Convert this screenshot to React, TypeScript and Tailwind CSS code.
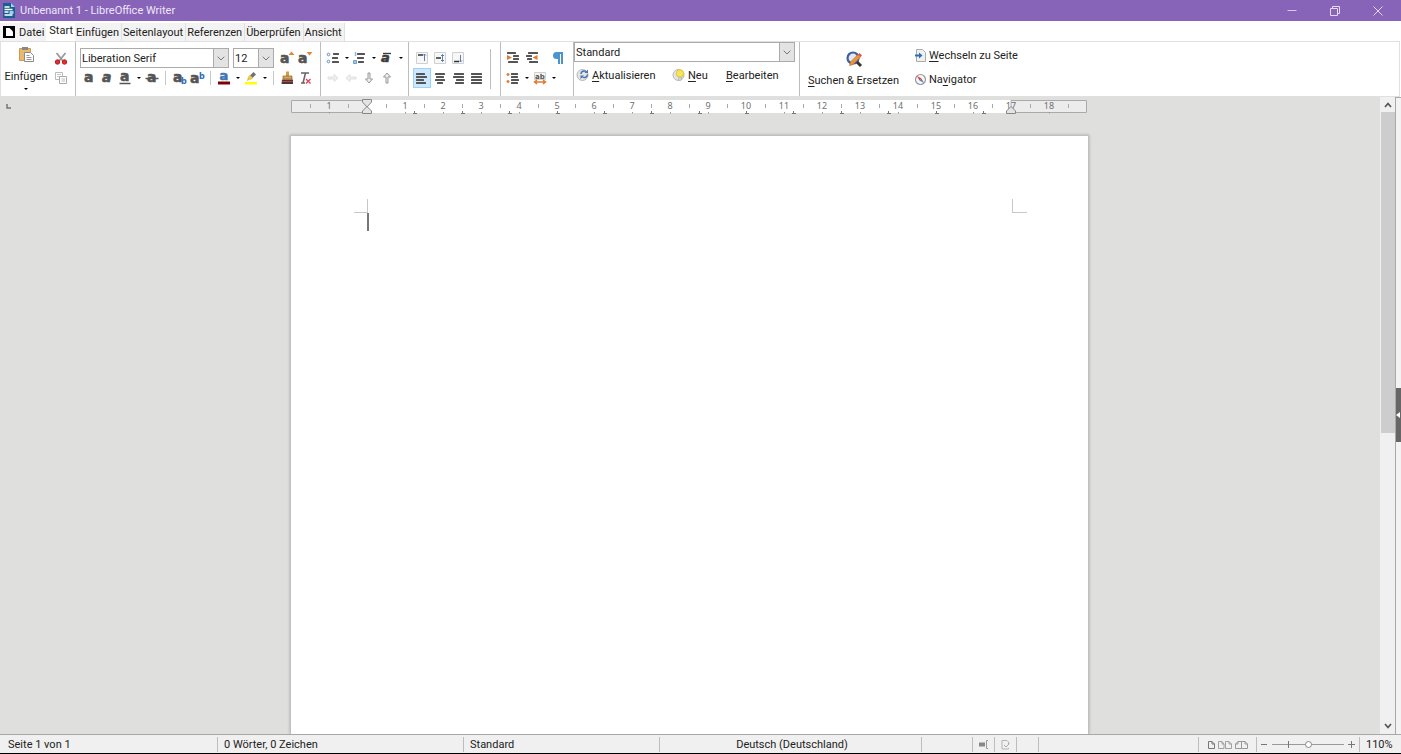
import type { ReactNode } from "react";

const INK = "#555555";

function Svg({ children, className = "h-4 w-4", box = "0 0 16 16" }: { children: ReactNode; className?: string; box?: string }) {
  return (
    <svg viewBox={box} className={`shrink-0 overflow-visible ${className}`} fill="none" aria-hidden="true">
      {children}
    </svg>
  );
}

function Tool({ label, active, children }: { label: string; active?: boolean; children: ReactNode }) {
  return (
    <button
      type="button"
      aria-label={label}
      title={label}
      className={`flex h-[20px] w-[18px] shrink-0 items-center justify-center ${active ? "border border-[#99d1ff] bg-[#cce8ff]" : "hover:bg-[#e5f3ff]"}`}
    >
      <Svg>{children}</Svg>
    </button>
  );
}

function Caret({ label }: { label: string }) {
  return (
    <button type="button" aria-label={label} className="flex h-[20px] w-[9px] shrink-0 items-center justify-center">
      <Svg box="0 0 4 2" className="h-[2px] w-1">
        <path d="M0 0h4L2 2z" fill="#000" />
      </Svg>
    </button>
  );
}

function Sep() {
  return <span className="mx-1 h-[14px] w-px shrink-0 bg-[#c8c8c8]" />;
}

function Divider() {
  return <div className="w-px shrink-0 self-stretch bg-[#bdbdbd]" />;
}

function Letter({ italic, fill = INK, x = 2, y = 12, size = 14 }: { italic?: boolean; fill?: string; x?: number; y?: number; size?: number }) {
  return (
    <text x={x} y={y} fontSize={size} fontWeight="700" fontStyle={italic ? "italic" : "normal"} fontFamily="DejaVu Sans, sans-serif" fill={fill} stroke={fill} strokeWidth="0.6">
      a
    </text>
  );
}

function Lines({ rows }: { rows: [number, number, number][] }) {
  return (
    <>
      {rows.map(([x, y, w]) => (
        <rect key={y} x={x} y={y} width={w} height="2" rx="0.5" fill={INK} />
      ))}
    </>
  );
}

function Combo({ label, value, options, className }: { label: string; value: string; options: string[]; className: string }) {
  return (
    <div className={`relative shrink-0 ${className}`}>
      <select
        aria-label={label}
        defaultValue={value}
        className="h-full w-full appearance-none rounded-none border border-[#ababab] bg-white pl-px pr-4 pt-[2px] text-[11px] leading-[16px] text-[#222] outline-none"
      >
        {options.map((o) => (
          <option key={o}>{o}</option>
        ))}
      </select>
      <span className="pointer-events-none absolute inset-y-0 right-0 flex w-4 items-center justify-center border border-[#ababab] bg-[#e3e3e3]">
        <Svg box="0 0 8 5" className="h-[5px] w-2">
          <path d="M.7.7 4 4 7.300.7" stroke="#777" />
        </Svg>
      </span>
    </div>
  );
}

function Key({ children }: { children: ReactNode }) {
  return <span className="underline underline-offset-2">{children}</span>;
}

function TextTool({ icon, children, className = "" }: { icon?: ReactNode; children: ReactNode; className?: string }) {
  return (
    <button type="button" className={`flex h-[18px] shrink-0 items-center gap-[2px] whitespace-nowrap ${className}`}>
      {icon}
      <span className="pt-[2px]">{children}</span>
    </button>
  );
}

const TABS = ["Start", "Einfügen", "Seitenlayout", "Referenzen", "Überprüfen", "Ansicht"];

function TitleBar() {
  return (
    <header className="flex h-[21px] shrink-0 items-center bg-[#8764b8] text-[11px] text-[#eee6f7]">
      <Svg className="ml-[2px] h-[15px] w-[14px]" box="0 0 14 15">
        <path d="M1 0h8l4 4v11H1z" fill="#15608f" />
        <path d="M9 0v4h4z" fill="#a5d2ee" />
        <path d="M2.500 4h5M2.500 6.500h8M2.500 9h4M2.500 12h8" stroke="#fff" strokeWidth="1.400" />
        <path d="M7.500 8h4v3h-4z" fill="#9fd0ee" />
      </Svg>
      <h1 className="ml-1 grow pt-[2px]">Unbenannt 1 - LibreOffice Writer</h1>
      <div className="flex pr-px">
        <button type="button" aria-label="Minimieren" className="flex h-[21px] w-[43px] items-center justify-center">
          <Svg className="h-[10px] w-[10px]" box="0 0 10 10">
            <path d="M.5 4.500h9" stroke="#d8c8ec" />
          </Svg>
        </button>
        <button type="button" aria-label="Verkleinern" className="flex h-[21px] w-[43px] items-center justify-center">
          <Svg className="h-[10px] w-[10px]" box="0 0 10 10">
            <path d="M.5 2.500h7v7h-7zM2.500 2.500v-2h7v7h-2" stroke="#e4d8f2" />
          </Svg>
        </button>
        <button type="button" aria-label="Schließen" className="flex h-[21px] w-[44px] items-center justify-center">
          <Svg className="h-[10px] w-[10px]" box="0 0 10 10">
            <path d="m.5.5 9 9m0-9-9 9" stroke="#e4d8f2" />
          </Svg>
        </button>
      </div>
    </header>
  );
}

function TabBar() {
  return (
    <nav className="flex h-[20px] shrink-0 items-end bg-white text-[11px] text-[#222]">
      <button type="button" className="flex h-[18px] items-center gap-1 bg-[#f3f3f3] pl-[3px] pr-[2px]">
        <Svg className="h-3 w-3" box="0 0 12 12">
          <path d="M0 0h12v12H0z" fill="#000" />
          <path d="M3 2h3.500L10 5.500V10H3z" fill="#fff" />
        </Svg>
        <span className="pt-[2px]">Datei</span>
      </button>
      {TABS.map((t) => (
        <button
          key={t}
          type="button"
          className={t === "Start" ? "h-[20px] bg-white pl-[3px] pr-[2px] pt-px" : "h-[18px] border-r border-[#e0e0e0] bg-[#f3f3f3] pl-px pr-[2px] pt-[2px]"}
        >
          {t}
        </button>
      ))}
    </nav>
  );
}

function Ribbon() {
  return (
    <div className="mr-px flex h-[56px] shrink-0 overflow-hidden border border-[#e0e0e0] bg-white text-[11px] leading-[14px] text-[#222]">
      <div className="flex w-[74px] shrink-0 items-start pl-[3px] pt-1">
        <button type="button" className="flex w-[44px] flex-col items-center">
          <Svg className="h-[18px] w-[18px]" box="0 0 18 18">
            <path d="M2.500 2.500h11v12h-11z" fill="#e9b96e" stroke="#c79a55" />
            <path d="M5 1h6v3H5z" fill="#888" />
            <path d="M7.500 6.500h6l3 3v6h-9z" fill="#fff" stroke="#8a8a8a" />
            <path d="M9.500 9.500h3M9.500 11.500h5M9.500 13.500h5" stroke="#999" />
          </Svg>
          <span className="mt-[6px]">Einfügen</span>
          <Svg box="0 0 4 2" className="mt-1 h-[2px] w-1">
            <path d="M0 0h4L2 2z" fill="#000" />
          </Svg>
        </button>
        <div className="ml-1 flex flex-col pt-[2px]">
          <Tool label="Ausschneiden">
            <path d="M3.500 3 10 11M12.500 3 6 11" stroke="#999" strokeWidth="1.800" />
            <circle cx="4.500" cy="12" r="2.200" fill="#e03030" stroke="#c01818" />
            <circle cx="11.500" cy="12" r="2.200" fill="#e03030" stroke="#c01818" />
          </Tool>
          <Tool label="Kopieren">
            <path d="M2.500 2.500h7v7h-7z" fill="#fff" stroke="#bbb" />
            <path d="M4 4.500h4M4 6.500h3" stroke="#c8c8c8" />
            <path d="M6.500 6.500h7v7h-7z" fill="#fff" stroke="#aaa" />
            <path d="M8.500 9h3.500M8.500 11h3.500" stroke="#bbb" />
          </Tool>
        </div>
      </div>
      <Divider />

      <div className="flex w-[244px] shrink-0 flex-col pl-1 pt-[6px]">
        <div className="flex items-center">
          <Combo label="Schriftname" value="Liberation Serif" options={["Liberation Serif", "Liberation Sans"]} className="h-[20px] w-[149px]" />
          <Combo label="Schriftgröße" value="12" options={["10", "11", "12", "14"]} className="ml-1 mr-1 h-[20px] w-[41px]" />
          <Tool label="Schrift vergrößern">
            <Letter x={1} y={13} />
            <path d="m9.500 5 3-3.500 3 3.500z" fill="#e8833a" />
          </Tool>
          <Tool label="Schrift verkleinern">
            <Letter x={1} y={13} />
            <path d="m9.500 2 3 3.500 3-3.500z" fill="#e8833a" />
          </Tool>
        </div>
        <div className="flex items-center">
          <Tool label="Fett">
            <Letter x={3} />
          </Tool>
          <Tool label="Kursiv">
            <Letter x={3} italic />
          </Tool>
          <Tool label="Unterstrichen">
            <Letter x={3} y={11} size={14} />
            <path d="M2.500 13.500h11" stroke={INK} strokeWidth="1.500" />
          </Tool>
          <Caret label="Unterstreichungsarten" />
          <Tool label="Durchgestrichen">
            <Letter x={3} />
            <path d="M1.500 8.500h13" stroke={INK} strokeWidth="1.500" />
          </Tool>
          <Sep />
          <Tool label="Tiefgestellt">
            <Letter x={2} y={12} size={14} />
            <text x="10" y="14" fontSize="8" fontWeight="700" fontFamily="DejaVu Sans, sans-serif" fill="#2f6db5">b</text>
          </Tool>
          <Tool label="Hochgestellt">
            <Letter x={1} y={13} size={14} />
            <text x="10" y="9" fontSize="8" fontWeight="700" fontFamily="DejaVu Sans, sans-serif" fill="#2f6db5">b</text>
          </Tool>
          <Sep />
          <Tool label="Schriftfarbe">
            <Letter x={3.5} y={10} fill="#3d77b8" size={13} />
            <path d="M2 11.500h12v3H2z" fill="#800000" />
          </Tool>
          <Caret label="Schriftfarbe wählen" />
          <Tool label="Zeichenhervorhebung">
            <path d="M2 12h12v2.500H2z" fill="#ffff00" />
            <path d="m4 11 1-4 2 2.500z" fill="#d9c21c" />
            <path d="m5.500 7 5-5 2.500 2.500-5 5z" fill="#707070" />
            <path d="m5 7 2-2 3 3-2.500 2z" fill="#e8c94a" />
          </Tool>
          <Caret label="Hervorhebungsfarbe wählen" />
          <Sep />
          <Tool label="Formatierung übertragen">
            <path d="M7 1.500h3v5H7z" fill="#d79a45" />
            <path d="M4 6h9v3H4z" fill="#e1a34c" stroke="#8a6122" strokeWidth="0.700" />
            <path d="M3 9.500h11V14H2.500z" fill="#4a3a35" />
            <path d="M3 11.500h11" stroke="#b44" />
          </Tool>
          <Tool label="Direkte Formatierung löschen">
            <path d="M4 3h8M8.500 3 6 13M4 13h4" stroke="#666" strokeWidth="1.500" />
            <path d="m9 9 4.500 4.500m0-4.500L9 13.500" stroke="#e04050" strokeWidth="1.300" />
          </Tool>
        </div>
      </div>
      <Divider />

      <div className="flex w-[87px] shrink-0 flex-col pl-[3px] pt-[6px]">
        <div className="flex">
          <Tool label="Aufzählungszeichen">
            <circle cx="3.500" cy="4.500" r="1.300" stroke="#5b8fc8" />
            <circle cx="3.500" cy="11.500" r="1.300" stroke="#5b8fc8" />
            <Lines rows={[[8, 3, 6], [7, 7, 6], [7, 11, 7]]} />
          </Tool>
          <Caret label="Aufzählungen wählen" />
          <Tool label="Nummerierung">
            <path d="M3.500 2v4" stroke="#8fb3dc" strokeWidth="1.500" />
            <path d="M1.500 10.500h3v3h-3z" fill="#a9c6e6" stroke="#6f9fd0" />
            <Lines rows={[[5, 3, 8], [5, 7, 7], [6, 11, 6]]} />
          </Tool>
          <Caret label="Nummerierungen wählen" />
          <Tool label="Zeichenformat">
            <Letter x={2} y={12} italic size={13} fill="#3c3c3c" />
            <path d="M4 3.500h8" stroke="#3c3c3c" strokeWidth="1.400" />
          </Tool>
          <Caret label="Zeichenformate wählen" />
        </div>
        <div className="flex">
          <Tool label="Tiefer stufen">
            <path d="M3 7h6V4.500L13 8l-4 3.500V9H3z" fill="#f0f0f0" stroke="#e0e0e0" />
          </Tool>
          <Tool label="Höher stufen">
            <path d="M13 7H7V4.500L3 8l4 3.500V9h6z" fill="#f0f0f0" stroke="#e0e0e0" />
          </Tool>
          <Tool label="Nach unten">
            <path d="M7 3v6H4.500L8 13l3.500-4H9V3z" fill="#eee" stroke="#999" />
          </Tool>
          <Tool label="Nach oben">
            <path d="M7 13V7H4.500L8 3l3.500 4H9v6z" fill="#eee" stroke="#999" />
          </Tool>
        </div>
      </div>
      <Divider />

      <div className="flex w-[81px] shrink-0 flex-col pl-1 pt-[6px]">
        <div className="flex">
          <Tool label="Oben ausrichten">
            <path d="M2.500 2.500h11v11h-11z" fill="#f7f7f7" stroke="#d0d0d0" />
            <path d="M4 5h5" stroke="#333" strokeWidth="1.500" />
            <path d="M10.500 4v7M9 5.500 10.500 4 12 5.500" stroke="#5b80b0" />
          </Tool>
          <Tool label="Vertikal zentrieren">
            <path d="M2.500 2.500h11v11h-11z" fill="#f7f7f7" stroke="#d0d0d0" />
            <path d="M4 8h5" stroke="#333" strokeWidth="1.500" />
            <path d="M10.500 4.500v7M9 6l1.500-1.500L12 6M9 10l1.500 1.500L12 10" stroke="#5b80b0" />
          </Tool>
          <Tool label="Unten ausrichten">
            <path d="M2.500 2.500h11v11h-11z" fill="#f7f7f7" stroke="#d0d0d0" />
            <path d="M4 11.500h5" stroke="#333" strokeWidth="1.500" />
            <path d="M10.500 5v7M9 10.500l1.500 1.500 1.500-1.500" stroke="#5b80b0" />
          </Tool>
        </div>
        <div className="flex">
          <Tool label="Linksbündig" active>
            <Lines rows={[[2, 3, 9], [2, 6, 11], [2, 9, 8], [2, 12, 10]]} />
          </Tool>
          <Tool label="Zentriert">
            <Lines rows={[[3, 3, 10], [4, 6, 8], [3, 9, 10], [5, 12, 6]]} />
          </Tool>
          <Tool label="Rechtsbündig">
            <Lines rows={[[4, 3, 10], [3, 6, 11], [6, 9, 8], [5, 12, 9]]} />
          </Tool>
          <Tool label="Blocksatz">
            <Lines rows={[[3, 3, 11], [3, 6, 11], [3, 9, 11], [3, 12, 11]]} />
          </Tool>
        </div>
      </div>
      <div className="my-[7px] w-px shrink-0 bg-[#bdbdbd]" />
      <div className="w-[9px] shrink-0" />
      <Divider />

      <div className="flex w-[72px] shrink-0 flex-col pl-[3px] pt-[6px]">
        <div className="flex">
          <Tool label="Einzug vergrößern">
            <Lines rows={[[2, 2, 9], [8, 5, 6], [8, 8, 6], [3, 11, 10]]} />
            <path d="M2 5 7 7.500 2 10z" fill="#e07b30" />
          </Tool>
          <Tool label="Einzug verkleinern">
            <Lines rows={[[5, 2, 10], [3, 5, 6], [4, 8, 5], [6, 11, 9]]} />
            <path d="M14.500 5 9.500 7.500l5 2.500z" fill="#e07b30" />
          </Tool>
          <span className="w-[9px] shrink-0" />
          <Tool label="Formatierungszeichen">
            <path d="M13 2H6.500a3.500 3.500 0 0 0 0 7H8v5h2V4h1v10h2z" fill="#4d94cf" />
          </Tool>
        </div>
        <div className="flex">
          <Tool label="Zeilenabstand">
            <path d="M1.500 4.500h3M1.500 11.500h3M3 3v3M3 10v3" stroke="#e07b30" strokeWidth="1.400" />
            <Lines rows={[[6, 3, 7], [6, 6, 7], [6, 9, 8], [6, 12, 7]]} />
          </Tool>
          <Caret label="Zeilenabstand wählen" />
          <Tool label="Zeichenabstand">
            <path d="M2.500 2.500h11v7h-11z" fill="#f4f4f4" stroke="#d0d0d0" />
            <text x="3" y="8.500" fontSize="7" fontWeight="700" fontFamily="DejaVu Sans, sans-serif" fill={INK}>ab</text>
            <path d="M3 12h10M5 10l-2.500 2L5 14M11 10l2.500 2L11 14" stroke="#e07b30" strokeWidth="1.500" />
          </Tool>
          <Caret label="Zeichenabstand wählen" />
        </div>
      </div>
      <Divider />

      <div className="flex w-[225px] shrink-0 flex-col">
        <Combo label="Absatzvorlage" value="Standard" options={["Standard", "Textkörper", "Überschrift 1"]} className="mr-1 h-[20px]" />
        <div className="mt-1 flex items-center">
          <TextTool
            className="ml-[2px] w-[96px]"
            icon={
              <Svg className="h-[14px] w-[14px]" box="0 0 14 14">
                <circle cx="6.500" cy="7" r="5.500" fill="#e4e4e4" stroke="#b8b8b8" />
                <path d="M5 6a3.200 3.200 0 0 1 5-2.500M11.500 6.500A3.200 3.200 0 0 1 6.500 9" stroke="#4674ae" strokeWidth="1.500" />
                <path d="M8.500 5H12V1.500zM8 7.500H4.500V11z" fill="#4674ae" />
              </Svg>
            }
          >
            <Key>A</Key>ktualisieren
          </TextTool>
          <TextTool
            className="w-[54px]"
            icon={
              <Svg className="h-[14px] w-[14px]" box="0 0 14 14">
                <circle cx="6.500" cy="7" r="5.500" fill="#e4e4e4" stroke="#b8b8b8" />
                <circle cx="8" cy="5.500" r="3.700" fill="#f7e65a" stroke="#e0c63a" />
                <path d="M6.500 9.500h3V12h-3z" fill="#ddd" stroke="#aaa" strokeWidth="0.600" />
              </Svg>
            }
          >
            <Key>N</Key>eu
          </TextTool>
          <TextTool>
            <Key>B</Key>earbeiten
          </TextTool>
        </div>
      </div>
      <Divider />

      <div className="flex shrink-0 items-start pl-2">
        <button type="button" className="flex flex-col items-center whitespace-nowrap pt-2">
          <Svg className="h-[18px] w-[18px]" box="0 0 18 18">
            <circle cx="8" cy="8" r="5.500" fill="#dfe8f5" stroke="#3f5f9f" strokeWidth="2.200" />
            <path d="m12 12 4 4" stroke="#333" strokeWidth="3" />
            <path d="m4.500 15.500 1-3.500L13 4.500l2.500 2.500-7.500 7.500z" fill="#f0923b" stroke="#b5651d" strokeWidth="0.600" />
            <path d="m13 4.500 1.500-1.500L17 5.500 15.500 7z" fill="#e0525a" />
          </Svg>
          <span className="mt-[6px]">
            <Key>S</Key>uchen &amp; Ersetzen
          </span>
        </button>
        <div className="ml-[15px] flex flex-col gap-[6px] pt-1">
          <TextTool
            icon={
              <Svg className="h-[13px] w-[13px]" box="0 0 13 13">
                <path d="M2.500.5h6l3 3v9h-9z" fill="#eef0f2" stroke="#aaa" />
                <path d="M1 5.500h4V3.500L8.500 6.500 5 9.500v-2H1z" fill="#2f6fae" />
              </Svg>
            }
          >
            <Key>W</Key>echseln zu Seite
          </TextTool>
          <TextTool
            icon={
              <Svg className="h-[13px] w-[13px]" box="0 0 13 13">
                <circle cx="6.500" cy="6.500" r="5" fill="#f6f6f6" stroke="#999" strokeWidth="1.200" />
                <path d="m3 3 4.500 2.500L5.500 7.500z" fill="#e03a3a" />
                <path d="m10 10-4.500-2.500 2-2z" fill="#5a7fb8" />
              </Svg>
            }
          >
            Na<Key>v</Key>igator
          </TextTool>
        </div>
      </div>
    </div>
  );
}

const ZERO = 76;
const CM = 37.9;
const MARKS = Array.from({ length: 18 }, (_, i) => i + 1);

function Ruler() {
  const at = (n: number) => Math.round(ZERO + CM * n);
  return (
    <svg viewBox="0 0 797 18" className="mt-px h-[18px] w-[797px] shrink-0" fill="none" role="img" aria-label="Lineal">
      <path d="M0 2h796v13H0z" fill="#fff" />
      <path d="M.5 2.500H76v12H.5zM720 2.500h75.500v12H720z" fill="#ececec" stroke="#aaa" />
      {[-1, ...MARKS].map((n) => (
        <g key={n}>
          <text x={at(n)} y="11" fontSize="9" textAnchor="middle" fontFamily="Noto Sans, sans-serif" fill="#707070">
            {Math.abs(n)}
          </text>
          <path d={`M${at(n) + 0.5} 14v1.500`} stroke="#999" />
        </g>
      ))}
      {[-2, -1, 0, ...MARKS].map((n) => (
        <path key={n} d={`M${at(n + 0.5) + 0.5} 6v4`} stroke="#aaa" />
      ))}
      {MARKS.slice(0, 13).map((n) => (
        <path key={n} d={`M${at(n * 1.25) - 1} 15.500h4M${at(n * 1.25) + 0.5} 13v2`} stroke="#777" />
      ))}
      <path d="M71.500 1.500h9v2.500L76 9l-4.500-5z" fill="#e4e4e4" stroke="#888" />
      <path d="M71.500 15.500h9V13L76 8.500 71.500 13zM715.500 15.500h9V13L720 8.500l-4.500 4.500z" fill="#e4e4e4" stroke="#888" />
    </svg>
  );
}

function Workspace() {
  return (
    <main className="flex min-h-0 grow bg-[#dfdfde]">
      <div className="relative flex min-w-0 grow flex-col items-center overflow-hidden pr-[2px]">
        <Svg className="absolute left-[6px] top-[7px] h-[5px] w-[5px]" box="0 0 5 5">
          <path d="M1 0v4h4" stroke="#777" strokeWidth="1.500" />
        </Svg>
        <Ruler />
        <article className="mt-[19px] w-[799px] grow border-x border-t border-[#c0c0c0] bg-white pl-[63px] pr-[61px] pt-[63px] shadow-[0_0_3px_rgba(0,0,0,0.25)]">
          <div className="flex justify-between">
            <div>
              <div className="h-[14px] w-[14px] border-b border-r border-[#c8c8c8]" />
              <div className="ml-[13px] h-[18px] w-[2px] bg-[#777]" />
            </div>
            <div className="h-[14px] w-[15px] border-b border-l border-[#c8c8c8]" />
          </div>
        </article>
      </div>
      <div className="flex w-[15px] shrink-0 flex-col bg-[#f0f0f0]">
        <button type="button" aria-label="Nach oben blättern" className="flex h-[15px] items-center justify-center">
          <Svg box="0 0 8 6" className="h-[6px] w-2">
            <path d="m1 5 3-3.500L7 5" stroke="#555" strokeWidth="1.700" />
          </Svg>
        </button>
        <div className="min-h-0 grow">
          <div className="ml-px h-[53%] bg-[#cdcdcd]" />
        </div>
        <button type="button" aria-label="Nach unten blättern" className="flex h-[16px] items-center justify-center">
          <Svg box="0 0 8 6" className="h-[6px] w-2">
            <path d="m1 1 3 3.500L7 1" stroke="#555" strokeWidth="1.700" />
          </Svg>
        </button>
      </div>
      <aside className="flex w-[6px] shrink-0 flex-col justify-center border-l border-t border-[#a8a8a8] bg-[#f3f3f3] pb-[2px]">
        <button type="button" aria-label="Seitenleiste einblenden" className="flex h-[54px] w-[5px] items-center bg-[#666]">
          <Svg box="0 0 4 6" className="h-[6px] w-1">
            <path d="M4 0v6L0 3z" fill="#fff" />
          </Svg>
        </button>
      </aside>
    </main>
  );
}

function StatusBar() {
  const cell = "flex shrink-0 items-center border-r border-[#bdbdbd] my-px";
  return (
    <footer className="shrink-0">
      <div className="flex h-[19px] border-t border-[#a8a8a8] bg-[#f0f0f0] pt-px text-[11px] leading-[14px] text-[#222]">
        <div className={`${cell} w-[218px] pl-2 pt-px`}>Seite 1 von 1</div>
        <div className={`${cell} w-[246px] pl-[6px] pt-px`}>0 Wörter, 0 Zeichen</div>
        <div className={`${cell} w-[196px] pl-[6px] pt-px`}>Standard</div>
        <div className={`${cell} w-[262px] justify-center pl-[3px] pt-px`}>Deutsch (Deutschland)</div>
        <div className={`${cell} w-[51px]`} />
        <div className={`${cell} w-[22px] justify-center`}>
          <Svg box="0 0 9 9" className="h-[9px] w-[9px]">
            <path d="M0 2.500h6v4H0z" fill="#888" />
            <path d="M9 .5H7.500v8H9" stroke="#999" />
          </Svg>
        </div>
        <div className={`${cell} w-[22px] justify-center`}>
          <Svg box="0 0 9 10" className="h-[10px] w-[9px]">
            <path d="M7.500 4V2L6 .5H1v8.500h6.500V8" stroke="#b4b4b4" />
            <path d="m3 5 2 2 3.500-3.500" stroke="#aaa" />
          </Svg>
        </div>
        <div className={`${cell} w-[22px]`} />
        <div className="my-px grow border-r border-[#bdbdbd]" />
        <div className={`${cell} w-[58px] justify-center gap-[3px]`}>
          <button type="button" aria-label="Einzelseite" className="flex">
            <Svg box="0 0 7 8" className="h-2 w-[7px]">
              <path d="M.5.5h3.500l2.500 2.500v4.500h-6zM4 .5V3h2.500" stroke="#777" />
            </Svg>
          </button>
          <button type="button" aria-label="Mehrere Seiten" className="flex">
            <Svg box="0 0 14 8" className="h-2 w-[14px]">
              <path d="M.5.500H4L6 3v4.500H.5zM4 .5V3h2M7.500.5H11L13.500 3v4.500h-6zM11 .5V3h2.500" stroke="#a0a0a0" />
            </Svg>
          </button>
          <button type="button" aria-label="Buchansicht" className="flex">
            <Svg box="0 0 13 8" className="h-2 w-[13px]">
              <path d="M.5 7.500V3L3 .5h3.500v7zM6.500.5H10L12.500 3v4.500h-6zM3 .5V3H.5M10 .5V3h2.500" stroke="#999" />
            </Svg>
          </button>
        </div>
        <div className={`${cell} w-[103px] justify-center gap-1`}>
          <button type="button" aria-label="Verkleinern" className="flex">
            <Svg box="0 0 7 7" className="h-[7px] w-[7px]">
              <path d="M0 3.500h6" stroke="#777" />
            </Svg>
          </button>
          <div className="relative flex h-3 w-[72px] items-center">
            <span className="h-px w-full bg-[#999]" />
            <span className="absolute left-[16px] top-[2px] h-[7px] w-px bg-[#777]" />
            <input
              type="range"
              aria-label="Zoomfaktor"
              min={0}
              max={100}
              defaultValue={50}
              className="absolute inset-0 h-3 w-full appearance-none bg-transparent [&::-webkit-slider-thumb]:h-[7px] [&::-webkit-slider-thumb]:w-[7px] [&::-webkit-slider-thumb]:appearance-none [&::-webkit-slider-thumb]:rounded-full [&::-webkit-slider-thumb]:border [&::-webkit-slider-thumb]:border-[#888] [&::-webkit-slider-thumb]:bg-white"
            />
          </div>
          <button type="button" aria-label="Vergrößern" className="flex">
            <Svg box="0 0 7 7" className="h-[7px] w-[7px]">
              <path d="M0 3.500h7M3.500 0v7" stroke="#777" />
            </Svg>
          </button>
        </div>
        <div className="flex w-[41px] shrink-0 items-center pl-[6px] pt-px">110%</div>
      </div>
      <div className="h-px bg-black" />
    </footer>
  );
}

export default function App() {
  return (
    <div className="flex h-screen flex-col overflow-hidden bg-white font-[Roboto,'Noto_Sans',sans-serif]">
      <TitleBar />
      <TabBar />
      <Ribbon />
      <Workspace />
      <StatusBar />
    </div>
  );
}
